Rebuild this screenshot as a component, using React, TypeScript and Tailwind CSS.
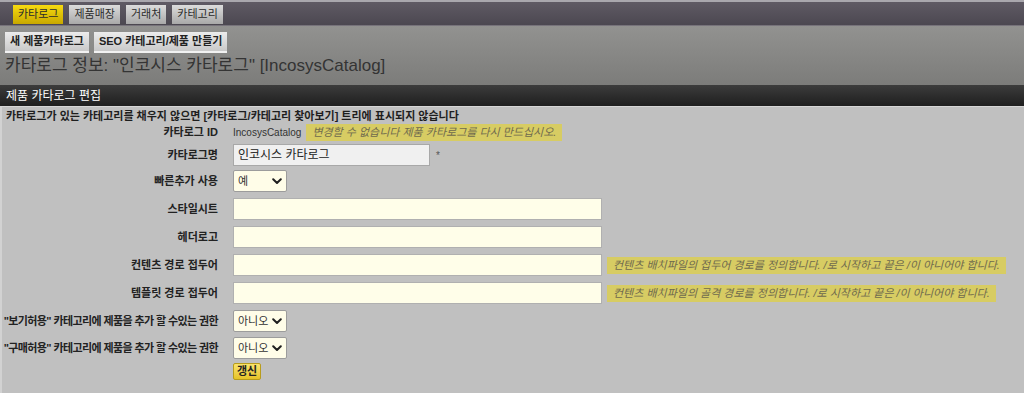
import React from 'react';

const tabs = [
    { label: '카타로그', active: true },
    { label: '제품매장', active: false },
    { label: '거래처', active: false },
    { label: '카테고리', active: false },
];

function Chevron() {
    return (
        <svg width="10" height="7" viewBox="0 0 10 7" className="shrink-0">
            <path d="M1.2 1.2L5 5l3.8-3.8" stroke="#1f1f1f" strokeWidth="2" fill="none" strokeLinecap="round" strokeLinejoin="round" />
        </svg>
    );
}

function Select({ value, width }: { value: string; width: string }) {
    return (
        <div className={`flex h-[22px] items-center justify-between whitespace-nowrap rounded-[2px] border border-[#9c9c9c] bg-[#fffde8] pl-[4px] pr-[4px] text-[11px] text-[#333] ${width}`}>
            <span>{value}</span>
            <Chevron />
        </div>
    );
}

function Hint({ children }: { children: React.ReactNode }) {
    return (
        <div className="ml-[5px] flex h-[17px] items-center whitespace-nowrap bg-[#d7cc63] px-[6px] text-[11px] italic text-[#6f6a4e]">
            {children}
        </div>
    );
}

function Row({ label, children, className = 'h-[22px] mb-[6px]', labelClass = '' }: { label: string; children?: React.ReactNode; className?: string; labelClass?: string }) {
    return (
        <div className={`flex items-center ${className}`}>
            <div className={`flex w-[233px] shrink-0 justify-end whitespace-nowrap pr-[15px] text-[11px] font-bold text-[#222] ${labelClass}`}>{label}</div>
            <div className="flex items-center">{children}</div>
        </div>
    );
}

export default function App() {
    return (
        <div className="flex h-[393px] w-full flex-col overflow-hidden bg-[#c0c0c0] font-['Liberation_Sans','Noto_Sans_CJK_KR',sans-serif]">
            {/* Top tabs */}
            <div className="flex h-[26px] shrink-0 gap-[6px] border-t-2 border-b border-t-[#a9a7ad] border-b-[#77737b] bg-gradient-to-b from-[#5f5a64] to-[#4c4851] pl-[13px] pt-[3px]">
                {tabs.map((t) => (
                    <div
                        key={t.label}
                        className={`flex h-[19px] items-center px-[5px] text-[11px] text-[#2b2b2b] ${
                            t.active
                                ? 'bg-gradient-to-b from-[#f6da10] to-[#c8a800]'
                                : 'bg-gradient-to-b from-[#dcdcdc] to-[#a9a9a9]'
                        }`}
                    >
                        {t.label}
                    </div>
                ))}
            </div>

            {/* Toolbar + title */}
            <div className="h-[59px] shrink-0 bg-gradient-to-b from-[#929290] to-[#7c7c7a] px-[5px] pt-[6px]">
                <div className="flex gap-[5px]">
                    <div className="flex h-[21px] items-center border-b-2 border-b-[#f2f2f2] bg-gradient-to-b from-[#ececec] to-[#c9c9c9] px-[5px] text-[11px] font-bold text-[#222]">
                        새 제품카타로그
                    </div>
                    <div className="flex h-[21px] items-center border-b-2 border-b-[#f2f2f2] bg-gradient-to-b from-[#ececec] to-[#c9c9c9] px-[5px] text-[11px] font-bold text-[#222]">
                        SEO 카테고리/제품 만들기
                    </div>
                </div>
                <div className="mt-[2px] text-[17px] leading-[22px] text-[#343434]">
                    카타로그 정보: "인코시스 카타로그" [IncosysCatalog]
                </div>
            </div>

            {/* Panel header */}
            <div className="flex h-[21px] shrink-0 items-center bg-gradient-to-b from-[#3c3c3c] to-[#1f1f1f] pl-[6px] text-[12px] text-white">
                제품 카타로그 편집
            </div>

            {/* Body */}
            <div className="flex-1 border-l-2 border-t border-l-[#d2d2d2] border-t-[#d6d6d6] pl-[4px] pt-[2px]">
                <div className="h-[15px] text-[11px] font-bold leading-[15px] text-[#1e1e1e]">
                    카타로그가 있는 카테고리를 채우지 않으면 [카타로그/카테고리 찾아보기] 트리에 표시되지 않습니다
                </div>
                <div className="-ml-[6px]">
                    <Row label="카타로그 ID" className="h-[17px] mb-[3px]">
                        <span className="text-[10px] text-[#333]">IncosysCatalog</span>
                        <Hint>변경할 수 없습니다 제품 카타로그를 다시 만드십시오.</Hint>
                    </Row>
                    <Row label="카타로그명" className="h-[22px] mb-[4px]">
                        <div className="flex h-[22px] w-[197px] items-center border border-[#a8a8a8] bg-[#f0f0f0] px-[4px] text-[12px] text-[#222]">
                            인코시스 카타로그
                        </div>
                        <span className="ml-[6px] text-[10px] text-[#555]">*</span>
                    </Row>
                    <Row label="빠른추가 사용">
                        <Select value="예" width="w-[54px]" />
                    </Row>
                    <Row label="스타일시트">
                        <div className="h-[22px] w-[369px] border border-[#b0b0b0] bg-[#fffee9]" />
                    </Row>
                    <Row label="헤더로고">
                        <div className="h-[22px] w-[369px] border border-[#b0b0b0] bg-[#fffee9]" />
                    </Row>
                    <Row label="컨텐츠 경로 접두어">
                        <div className="h-[22px] w-[369px] border border-[#b0b0b0] bg-[#fffee9]" />
                        <Hint>컨텐츠 배치파일의 접두어 경로를 정의합니다. /로 시작하고 끝은 /이 아니어야 합니다.</Hint>
                    </Row>
                    <Row label="템플릿 경로 접두어">
                        <div className="h-[22px] w-[369px] border border-[#b0b0b0] bg-[#fffee9]" />
                        <Hint>컨텐츠 배치파일의 골격 경로를 정의합니다. /로 시작하고 끝은 /이 아니어야 합니다.</Hint>
                    </Row>
                    <Row label={'"보기허용" 카테고리에 제품을 추가 할 수있는 권한'} className="h-[22px] mb-[5px]" labelClass="tracking-[-0.6px]">
                        <Select value="아니오" width="w-[54px]" />
                    </Row>
                    <Row label={'"구매허용" 카테고리에 제품을 추가 할 수있는 권한'} className="h-[22px] mb-[4px]" labelClass="tracking-[-0.6px]">
                        <Select value="아니오" width="w-[54px]" />
                    </Row>
                    <Row label="" className="h-[17px]">
                        <div className="flex h-[17px] items-center rounded-[2px] border border-[#b89c1c] bg-gradient-to-b from-[#fae36a] to-[#e6c325] px-[3px] text-[11px] font-bold text-[#222]">
                            갱신
                        </div>
                    </Row>
                </div>
            </div>
        </div>
    );
}
